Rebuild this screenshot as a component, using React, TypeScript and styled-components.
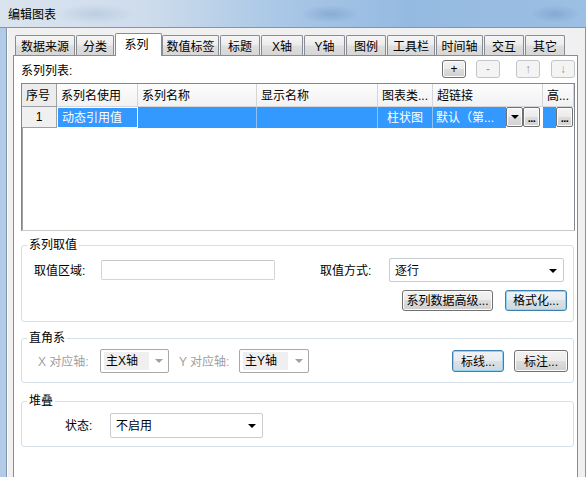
import React from 'react';
import styled, { createGlobalStyle, css } from 'styled-components';

const GlobalStyle = createGlobalStyle`
  html, body {
    margin: 0;
    padding: 0;
  }
  body {
    width: 586px;
    height: 477px;
    overflow: hidden;
    background: #f0f0f0;
    font-family: 'Liberation Sans', 'Noto Sans CJK SC', sans-serif;
    font-size: 12px;
    color: #000;
  }
  * {
    box-sizing: border-box;
  }
`;

const Window = styled.div`
  width: 586px;
  height: 477px;
  display: flex;
  flex-direction: column;
  overflow: hidden;
`;

const TitleBar = styled.div`
  height: 28px;
  flex-shrink: 0;
  display: flex;
  align-items: center;
  padding: 2px 0 0 8px;
  line-height: 14px;
  border-bottom: 1px solid #8296ab;
  background:
    radial-gradient(ellipse 40px 10px at 95px 14px, rgba(150, 175, 205, 0.35), transparent),
    radial-gradient(ellipse 30px 9px at 330px 14px, rgba(90, 130, 180, 0.35), transparent),
    radial-gradient(ellipse 25px 9px at 555px 14px, rgba(90, 130, 180, 0.35), transparent),
    linear-gradient(90deg, #dae4ee 0%, #cedcec 25%, #a9c7e6 48%, #95bae1 70%, #9cbfe3 100%);
`;

const Frame = styled.div`
  flex: 1;
  display: flex;
  min-height: 0;
  border-left: 6px solid #b2cbe6;
  border-right: 1px solid #8296ab;
`;

const Body = styled.div`
  flex: 1;
  min-width: 0;
  display: flex;
  flex-direction: column;
  background: #f0f0f0;
  border-left: 1px solid #8296ab;
  box-shadow: inset 1px 0 0 #ffffff;
  padding: 5px 7px 0 6px;
`;

const TabRow = styled.div`
  height: 22px;
  display: flex;
  align-items: flex-end;
  gap: 1px;
  padding-left: 2px;
  position: relative;
  z-index: 1;
`;

const Tab = styled.div<{ $w: number; $active?: boolean }>`
  width: ${(p) => p.$w}px;
  height: 20px;
  flex-shrink: 0;
  display: flex;
  align-items: center;
  justify-content: center;
  padding-top: 3px;
  line-height: 14px;
  border: 1px solid #898c95;
  border-bottom: none;
  border-radius: 2px 2px 0 0;
  background: linear-gradient(#f6f6f6 0%, #ececec 45%, #dedede 55%, #d6d6d6 100%);
  ${(p) =>
    p.$active &&
    css`
      height: 23px;
      margin-bottom: -1px;
      margin-right: -1px;
      padding: 0 4px 0 0;
      background: #fff;
    `}
`;

const Panel = styled.div`
  flex: 1;
  display: flex;
  flex-direction: column;
  background: #fff;
  border: 1px solid #898c95;
  border-bottom: none;
  padding: 4px 0 0 7px;
`;

const ListHeader = styled.div`
  width: 554px;
  height: 18px;
  display: flex;
  align-items: center;
`;

const ListLabel = styled.span`
  padding-top: 3px;
  line-height: 14px;
`;

const SmallButton = styled.button<{ $gap: number; $disabled?: boolean }>`
  width: 24px;
  height: 18px;
  margin-left: ${(p) => p.$gap}px;
  padding: 0;
  font-family: 'Liberation Sans', 'Noto Sans CJK SC', sans-serif;
  font-size: 12px;
  line-height: 14px;
  color: #000;
  border: 1px solid #707070;
  border-radius: 3px;
  background: linear-gradient(#f2f2f2 0%, #ebebeb 50%, #dddddd 50%, #cfcfcf 100%);
  box-shadow: inset 0 0 0 1px #fcfcfc;
  ${(p) =>
    p.$disabled &&
    css`
      color: #9a9a9a;
      border-color: #c2c6c9;
      background: #f4f4f4;
      box-shadow: none;
    `}
`;

const Grid = styled.div`
  width: 554px;
  height: 148px;
  margin-top: 5px;
  border: 1px solid #828790;
  border-bottom-color: #c9c9c9;
  box-shadow: inset 1px 0 0 #a0a0a0;
  background: #fff;
`;

const HeadRow = styled.div`
  display: flex;
  height: 23px;
`;

const HeadCell = styled.div<{ $w: number; $first?: boolean }>`
  width: ${(p) => p.$w}px;
  flex-shrink: 0;
  display: flex;
  align-items: center;
  padding: 1px 0 0 4px;
  line-height: 14px;
  white-space: nowrap;
  overflow: hidden;
  border-right: 1px solid #d5d5d5;
  border-bottom: 1px solid #d5d5d5;
  background: linear-gradient(#fdfdfd, #f1f2f4);
  ${(p) =>
    p.$first &&
    css`
      background: #ececec;
      border-right-color: #a0a0a0;
      border-bottom-color: #a0a0a0;
    `}
`;

const DataRow = styled.div`
  display: flex;
  height: 21px;
`;

const NoCell = styled.div`
  width: 35px;
  flex-shrink: 0;
  display: flex;
  align-items: center;
  justify-content: center;
  line-height: 14px;
  background: #f0f0f0;
  border-right: 1px solid #a0a0a0;
  border-bottom: 1px solid #a0a0a0;
`;

const BlueCell = styled.div<{ $w: number; $focus?: boolean; $center?: boolean }>`
  width: ${(p) => p.$w}px;
  flex-shrink: 0;
  display: flex;
  align-items: center;
  justify-content: ${(p) => (p.$center ? 'center' : 'flex-start')};
  padding-left: ${(p) => (p.$center ? 0 : 4)}px;
  line-height: 14px;
  white-space: nowrap;
  overflow: hidden;
  color: #fff;
  background: #3399ff;
  border-right: 1px solid #8cc3f7;
  ${(p) =>
    p.$focus &&
    css`
      border: 1px solid #fff;
      padding-left: 4px;
    `}
`;

const SplitCell = styled.div<{ $w: number }>`
  width: ${(p) => p.$w}px;
  flex-shrink: 0;
  display: flex;
  background: #fff;
`;

const BlueText = styled.div`
  flex: 1;
  display: flex;
  align-items: center;
  padding-left: 3px;
  line-height: 14px;
  color: #fff;
  background: #3399ff;
  white-space: nowrap;
  overflow: hidden;
`;

const CellButton = styled.div`
  width: 17px;
  height: 20px;
  flex-shrink: 0;
  display: flex;
  align-items: flex-end;
  justify-content: center;
  padding-bottom: 3px;
  font-family: 'Liberation Sans', sans-serif;
  font-size: 11px;
  font-weight: bold;
  line-height: 10px;
  letter-spacing: -0.5px;
  border: 1px solid #707070;
  border-radius: 2px;
  background: linear-gradient(#f4f4f4 0%, #ebebeb 50%, #dddddd 50%, #d2d2d2 100%);
  box-shadow: inset 0 0 0 1px #fcfcfc;
`;

const DropButton = styled(CellButton)`
  align-items: center;
  padding-bottom: 0;
`;

const Arrow = styled.span<{ $gray?: boolean }>`
  width: 0;
  height: 0;
  border-left: 4px solid transparent;
  border-right: 4px solid transparent;
  border-top: 4px solid ${(p) => (p.$gray ? '#a0a0a0' : '#000')};
`;

const Group = styled.fieldset<{ $top: number; $bottom: number }>`
  width: 553px;
  min-width: 0;
  margin: ${(p) => p.$top}px 0 0 0;
  padding: 0 0 ${(p) => p.$bottom}px 0;
  border: 1px solid #d5dfe5;
  border-radius: 3px;
`;

const Legend = styled.legend`
  margin-left: 5px;
  padding: 0 2px;
  line-height: 14px;
  font-size: 12px;
`;

const FieldRow = styled.div<{ $top: number; $left: number; $right?: number; $end?: boolean }>`
  display: flex;
  align-items: center;
  margin-top: ${(p) => p.$top}px;
  padding: 0 ${(p) => p.$right ?? 0}px 0 ${(p) => p.$left}px;
  justify-content: ${(p) => (p.$end ? 'flex-end' : 'flex-start')};
`;

const Label = styled.span<{ $w: number; $gap?: number; $disabled?: boolean }>`
  width: ${(p) => p.$w}px;
  margin-left: ${(p) => p.$gap ?? 0}px;
  flex-shrink: 0;
  line-height: 14px;
  padding-top: 1px;
  white-space: nowrap;
  color: ${(p) => (p.$disabled ? '#a0a0a0' : '#000')};
`;

const TextBox = styled.div<{ $w: number }>`
  width: ${(p) => p.$w}px;
  height: 20px;
  border: 1px solid #d2d5d9;
  border-top-color: #c4c7cb;
  border-radius: 2px;
  background: #fff;
`;

const Select = styled.div<{ $w: number; $h: number; $disabled?: boolean }>`
  width: ${(p) => p.$w}px;
  height: ${(p) => p.$h}px;
  flex-shrink: 0;
  display: flex;
  align-items: center;
  padding: 1px 6px 0 5px;
  line-height: 14px;
  border: 1px solid #c8cbcf;
  border-radius: 2px;
  background: #fff;
  ${(p) =>
    p.$disabled &&
    css`
      border-color: #a8a8a8;
      padding: 0 5px 0 3px;
    `}
`;

const SelectText = styled.span<{ $disabled?: boolean }>`
  flex: 1;
  white-space: nowrap;
  ${(p) =>
    p.$disabled &&
    css`
      flex: 0 0 45px;
      height: 18px;
      margin-right: auto;
      padding: 2px 0 0 2px;
      background: #efefef;
    `}
`;

const PushButton = styled.button<{ $w: number; $h: number; $gap?: number; $focus?: boolean }>`
  width: ${(p) => p.$w}px;
  height: ${(p) => p.$h}px;
  margin-left: ${(p) => p.$gap ?? 0}px;
  padding: 1px 0 0 0;
  font-family: 'Liberation Sans', 'Noto Sans CJK SC', sans-serif;
  font-size: 12px;
  line-height: 14px;
  color: #000;
  white-space: nowrap;
  border: 1px solid #707070;
  border-radius: 3px;
  background: linear-gradient(#f2f2f2 0%, #ebebeb 50%, #dddddd 50%, #cfcfcf 100%);
  box-shadow: inset 0 0 0 1px #fcfcfc;
  ${(p) =>
    p.$focus &&
    css`
      border-color: #3c7fb1;
      background: linear-gradient(#f0f3f5 0%, #e8ecef 50%, #dbe1e5 50%, #d0d8dd 100%);
      box-shadow: inset 0 0 0 1px #8fd3f5;
    `}
`;

const tabs = [
  { label: '数据来源', w: 60 },
  { label: '分类', w: 38 },
  { label: '系列', w: 47, active: true },
  { label: '数值标签', w: 57 },
  { label: '标题', w: 40 },
  { label: 'X轴', w: 42 },
  { label: 'Y轴', w: 41 },
  { label: '图例', w: 40 },
  { label: '工具栏', w: 48 },
  { label: '时间轴', w: 47 },
  { label: '交互', w: 40 },
  { label: '其它', w: 40 },
];

const columns = [
  { title: '序号', w: 35 },
  { title: '系列名使用', w: 81 },
  { title: '系列名称', w: 119 },
  { title: '显示名称', w: 121 },
  { title: '图表类...', w: 55 },
  { title: '超链接', w: 110 },
  { title: '高...', w: 31 },
];

const App: React.FC = () => {
  return (
    <Window>
      <GlobalStyle />
      <TitleBar>编辑图表</TitleBar>
      <Frame>
        <Body>
          <TabRow>
            {tabs.map((t) => (
              <Tab key={t.label} $w={t.w} $active={t.active}>
                {t.label}
              </Tab>
            ))}
          </TabRow>
          <Panel>
            <ListHeader>
              <ListLabel>系列列表:</ListLabel>
              <SmallButton $gap={0} style={{ marginLeft: 'auto' }}>
                +
              </SmallButton>
              <SmallButton $gap={10} $disabled>
                -
              </SmallButton>
              <SmallButton $gap={16} $disabled>
                ↑
              </SmallButton>
              <SmallButton $gap={11} $disabled>
                ↓
              </SmallButton>
            </ListHeader>

            <Grid>
              <HeadRow>
                {columns.map((c, i) => (
                  <HeadCell key={c.title} $w={c.w} $first={i === 0}>
                    {c.title}
                  </HeadCell>
                ))}
              </HeadRow>
              <DataRow>
                <NoCell>1</NoCell>
                <BlueCell $w={81} $focus>
                  动态引用值
                </BlueCell>
                <BlueCell $w={119} />
                <BlueCell $w={121} />
                <BlueCell $w={55} $center>
                  柱状图
                </BlueCell>
                <SplitCell $w={110}>
                  <BlueText>默认（第...</BlueText>
                  <DropButton>
                    <Arrow />
                  </DropButton>
                  <CellButton>...</CellButton>
                  <span style={{ width: 3 }} />
                </SplitCell>
                <SplitCell $w={31}>
                  <BlueText />
                  <CellButton>...</CellButton>
                  <span style={{ width: 1 }} />
                </SplitCell>
              </DataRow>
            </Grid>

            <Group $top={7} $bottom={10}>
              <Legend>系列取值</Legend>
              <FieldRow $top={6} $left={12}>
                <Label $w={67}>取值区域:</Label>
                <TextBox $w={174} />
                <Label $w={69} $gap={45}>
                  取值方式:
                </Label>
                <Select $w={175} $h={24}>
                  <SelectText>逐行</SelectText>
                  <Arrow />
                </Select>
              </FieldRow>
              <FieldRow $top={8} $left={0} $right={6} $end>
                <PushButton $w={91} $h={21}>
                  系列数据高级...
                </PushButton>
                <PushButton $w={62} $h={21} $gap={12} $focus>
                  格式化...
                </PushButton>
              </FieldRow>
            </Group>

            <Group $top={9} $bottom={9}>
              <Legend>直角系</Legend>
              <FieldRow $top={4} $left={16} $right={5}>
                <Label $w={62} $disabled>
                  X 对应轴:
                </Label>
                <Select $w={69} $h={24} $disabled>
                  <SelectText $disabled>主X轴</SelectText>
                  <Arrow $gray />
                </Select>
                <Label $w={60} $gap={10} $disabled>
                  Y 对应轴:
                </Label>
                <Select $w={70} $h={24} $disabled>
                  <SelectText $disabled>主Y轴</SelectText>
                  <Arrow $gray />
                </Select>
                <PushButton $w={52} $h={22} $focus style={{ marginLeft: 'auto' }}>
                  标线...
                </PushButton>
                <PushButton $w={54} $h={22} $gap={10}>
                  标注...
                </PushButton>
              </FieldRow>
            </Group>

            <Group $top={11} $bottom={8}>
              <Legend>堆叠</Legend>
              <FieldRow $top={5} $left={43}>
                <Label $w={45}>状态:</Label>
                <Select $w={153} $h={25}>
                  <SelectText>不启用</SelectText>
                  <Arrow />
                </Select>
              </FieldRow>
            </Group>
          </Panel>
        </Body>
      </Frame>
    </Window>
  );
};

export default App;
